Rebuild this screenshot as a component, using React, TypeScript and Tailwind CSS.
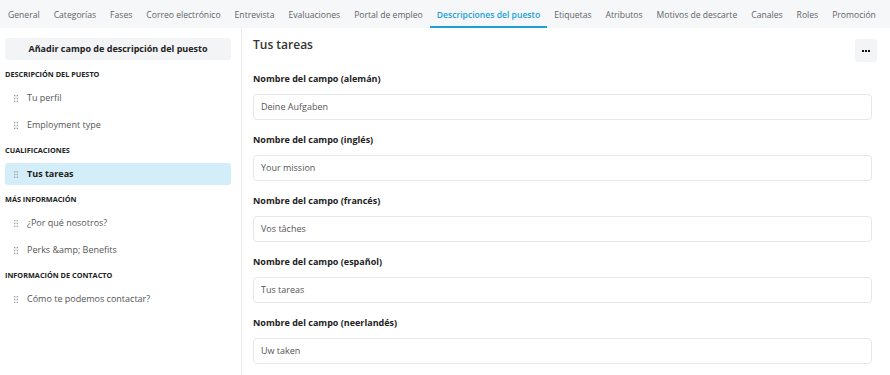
import React from "react";

const tabs = [
  "General",
  "Categorías",
  "Fases",
  "Correo electrónico",
  "Entrevista",
  "Evaluaciones",
  "Portal de empleo",
  "Descripciones del puesto",
  "Etiquetas",
  "Atributos",
  "Motivos de descarte",
  "Canales",
  "Roles",
  "Promoción",
];

const sections: { title: string; items: string[] }[] = [
  { title: "Descripción del puesto", items: ["Tu perfil", "Employment type"] },
  { title: "Cualificaciones", items: ["Tus tareas"] },
  { title: "Más información", items: ["¿Por qué nosotros?", "Perks &amp; Benefits"] },
  { title: "Información de contacto", items: ["Cómo te podemos contactar?"] },
];

const fields = [
  { label: "Nombre del campo (alemán)", value: "Deine Aufgaben" },
  { label: "Nombre del campo (inglés)", value: "Your mission" },
  { label: "Nombre del campo (francés)", value: "Vos tâches" },
  { label: "Nombre del campo (español)", value: "Tus tareas" },
  { label: "Nombre del campo (neerlandés)", value: "Uw taken" },
];

function Handle() {
  return (
    <svg width="4" height="7" viewBox="0 0 4 7" className="shrink-0">
      {[0.7, 3.3].map((x) =>
        [0.7, 3.5, 6.3].map((y) => (
          <rect key={`${x}-${y}`} x={x - 0.7} y={y - 0.7} width="1.4" height="1.4" fill="#a3a7ad" />
        ))
      )}
    </svg>
  );
}

export default function App() {
  return (
    <div
      className="w-[890px] h-[375px] overflow-hidden bg-white flex flex-col"
      style={{ fontFamily: '"Open Sans", "Noto Sans", sans-serif' }}
    >
      <div className="h-[28px] shrink-0 bg-[#f6f7f8] flex items-stretch pl-[1px] overflow-hidden">
        {tabs.map((t) => {
          const active = t === "Descripciones del puesto";
          return (
            <div
              key={t}
              className={
                active
                  ? "shrink-0 whitespace-nowrap px-[7px] flex items-center text-[8.6px] font-semibold text-[#1a9fd9] border-b-2 border-[#1a9fd9] pt-[4px]"
                  : "shrink-0 whitespace-nowrap px-[7px] flex items-center text-[8.6px] text-[#5f6368] pt-[4px] pb-[2px]"
              }
            >
              {t}
            </div>
          );
        })}
      </div>
      <div className="flex flex-1 min-h-0">
        <div className="w-[242px] shrink-0 border-r border-[#ececec] pl-[5px] pr-[10px] pt-[10px] flex flex-col">
          <div className="h-[22px] rounded-[3px] bg-[#f3f4f6] flex items-center justify-center text-[9px] font-bold text-[#222]">
            Añadir campo de descripción del puesto
          </div>
          {sections.map((s) => (
            <div key={s.title} className="mt-[8px] flex flex-col">
              <div className="h-[12px] leading-[12px] text-[7.3px] font-bold uppercase text-[#222]">
                {s.title}
              </div>
              <div className="mt-[7px] flex flex-col gap-[5px]">
                {s.items.map((it) => {
                  const sel = it === "Tus tareas";
                  return (
                    <div
                      key={it}
                      className={
                        sel
                          ? "h-[22px] rounded-[3px] bg-[#d3eef9] flex items-center gap-[9px] pl-[9px] text-[9px] font-bold text-[#222]"
                          : "h-[22px] rounded-[3px] flex items-center gap-[9px] pl-[9px] text-[9px] text-[#555]"
                      }
                    >
                      <Handle />
                      <span>{it}</span>
                    </div>
                  );
                })}
              </div>
            </div>
          ))}
        </div>
        <div className="flex-1 pl-[11px] pr-[13px] pt-[9px] flex flex-col">
          <div className="flex justify-between items-start">
            <div className="h-[16px] leading-[16px] text-[12px] font-semibold text-[#333]">Tus tareas</div>
            <div className="mt-[2px] w-[22px] h-[23px] rounded-[3px] bg-[#f3f4f6] flex items-center justify-center gap-[1px]">
              <span className="w-[2px] h-[2px] bg-[#111]" />
              <span className="w-[2px] h-[2px] bg-[#111]" />
              <span className="w-[2px] h-[2px] bg-[#111]" />
            </div>
          </div>
          <div className="mt-[11px] mr-[5px] flex flex-col gap-[14px]">
            {fields.map((f) => (
              <div key={f.label} className="flex flex-col">
                <div className="h-[12px] leading-[12px] text-[9px] font-bold text-[#222]">{f.label}</div>
                <div className="mt-[9px] h-[26px] rounded-[4px] border border-[#e6e7e9] flex items-center px-[7px] text-[9px] text-[#555]">
                  {f.value}
                </div>
              </div>
            ))}
          </div>
        </div>
      </div>
    </div>
  );
}
